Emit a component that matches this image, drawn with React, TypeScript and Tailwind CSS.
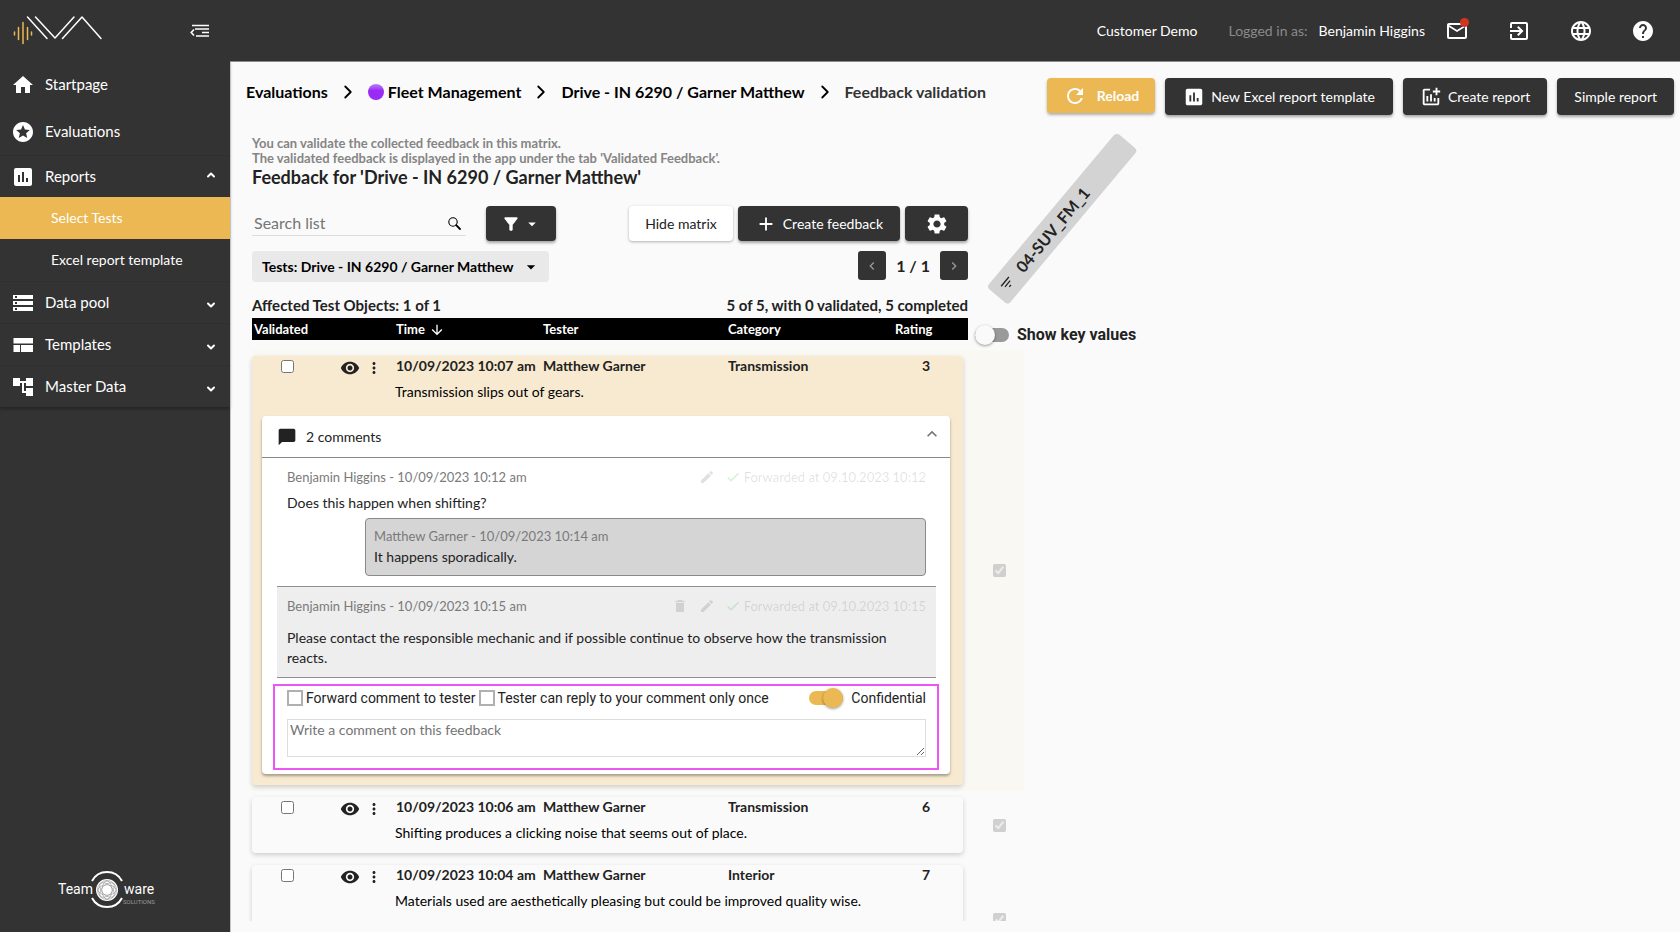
import type { ReactNode } from "react";
import {
    MdAccountTree,
    MdAdd,
    MdAddchart,
    MdArrowDownward,
    MdArrowDropDown,
    MdAssessment,
    MdChatBubble,
    MdCheck,
    MdChevronLeft,
    MdChevronRight,
    MdDelete,
    MdEdit,
    MdExitToApp,
    MdFilterAlt,
    MdFilterList,
    MdHelp,
    MdHome,
    MdKeyboardArrowUp,
    MdLanguage,
    MdMailOutline,
    MdMoreVert,
    MdRefresh,
    MdSettings,
    MdStars,
    MdStorage,
    MdVisibility,
} from "react-icons/md";
import { ChevronDown, ChevronRight, ChevronUp } from "lucide-react";

const darkButton =
    "flex items-center justify-center rounded-[4px] bg-[#333333] text-white text-sm shadow-[0_2px_3px_rgba(0,0,0,0.35)]";

const Logo = () => (
    <svg width="90" height="32" viewBox="0 0 90 32" fill="none" aria-label="IVA">
        <g stroke="#ebb853" strokeWidth="1.5" strokeLinecap="round">
            <path d="M1.5 17v3M5.5 12.5v12M10 7.500v21M14.500 12.500v12M18.500 17v3" />
        </g>
        <g stroke="#ffffff" strokeWidth="1.5" strokeLinecap="round" strokeLinejoin="round">
            <path d="M14.500 2L34 23.500" />
            <path d="M22.500 2L42 23L61 2" />
            <path d="M49.500 23.500L69 2L88 23.500" />
        </g>
    </svg>
);

const MenuFoldIcon = () => (
    <svg width="19" height="14" viewBox="0 0 19 14" fill="none" stroke="#ffffff" strokeWidth="1.600">
        <path d="M2 1.500H19M5 5H19M12 8.500H19M6 12H19" />
        <path d="M4 5.500L1.200 8.500L4 11.500" />
    </svg>
);

const TemplatesIcon = () => (
    <svg width="24" height="24" viewBox="0 0 24 24" fill="currentColor">
        <path d="M2.500 5h19.500v5.500H2.500zM2.500 12h6.500v7H2.500zM10 12h12v7H10z" />
    </svg>
);

const SearchIcon = () => (
    <svg width="13" height="13" viewBox="0 0 13 13" fill="none" stroke="#000000">
        <circle cx="5" cy="5" r="4.200" strokeWidth="1.100" />
        <path d="M8.200 8.200L12 12" strokeWidth="1.800" strokeLinecap="round" />
    </svg>
);

const TeamwareLogo = () => (
    <svg width="98" height="38" viewBox="0 0 98 38" fill="none" aria-label="Teamware Solutions">
        <g fill="#ffffff" fontFamily="Roboto, sans-serif">
            <text x="0" y="23" fontSize="14">Team</text>
            <text x="66" y="23" fontSize="14">ware</text>
            <text x="65" y="33" fontSize="6" fill="#999999">SOLUTIONS</text>
        </g>
        <g stroke="#ffffff" strokeWidth="2">
            <path d="M34 10A17 17 0 0 1 64 10" />
            <path d="M34 27A17 17 0 0 0 64 27" />
        </g>
        <circle cx="49" cy="19" r="11" fill="#ffffff" />
        <g stroke="#8a8a8a" strokeWidth="0.600">
            <circle cx="49" cy="19" r="9.500" />
            <ellipse cx="49" cy="19" rx="9" ry="5" />
            <ellipse cx="49" cy="19" rx="5" ry="9" />
            <ellipse cx="49" cy="19" rx="9" ry="5" transform="rotate(45 49 19)" />
            <ellipse cx="49" cy="19" rx="9" ry="5" transform="rotate(-45 49 19)" />
        </g>
        <circle cx="49" cy="19" r="4.500" fill="#ffffff" />
    </svg>
);

const NavItem = ({ icon, label, open }: { icon: ReactNode; label: string; open?: boolean }) => (
    <a
        href="#"
        className={
            open === undefined
                ? "flex h-[47px] items-center gap-[10px] pl-[11px] text-[15px]"
                : "flex h-[42px] items-center gap-[10px] border-t border-[#2f2f2f] pl-[11px] pr-[13px] text-[15px]"
        }
    >
        {icon}
        <span className="flex-1">{label}</span>
        {open === true && <ChevronUp size={12} strokeWidth={4} className="mb-1" />}
        {open === false && <ChevronDown size={12} strokeWidth={4} className="mt-1" />}
    </a>
);

const Sidebar = () => (
    <aside className="flex w-[230px] shrink-0 flex-col bg-[#333333] text-white">
        <div className="flex h-[62px] items-center justify-between pl-[13px] pr-[21px]">
            <Logo />
            <button aria-label="Collapse menu">
                <MenuFoldIcon />
            </button>
        </div>
        <nav className="-mt-px shadow-[0_2px_3px_rgba(0,0,0,0.3)]">
            <NavItem icon={<MdHome size={24} />} label="Startpage" />
            <NavItem icon={<MdStars size={24} />} label="Evaluations" />
            <NavItem icon={<MdAssessment size={24} />} label="Reports" open />
            <a href="#" className="flex h-[42px] items-center bg-[#ebb853] pl-[51px] text-sm">Select Tests</a>
            <a href="#" className="flex h-[42px] items-center pl-[51px] text-sm">Excel report template</a>
            <NavItem icon={<MdStorage size={24} />} label="Data pool" open={false} />
            <NavItem icon={<TemplatesIcon />} label="Templates" open={false} />
            <NavItem icon={<MdAccountTree size={24} />} label="Master Data" open={false} />
        </nav>
        <div className="mt-auto flex justify-center pb-[23px] pr-4">
            <TeamwareLogo />
        </div>
    </aside>
);

const TopBar = () => (
    <header className="flex h-[62px] shrink-0 items-center justify-end border-b border-[#8a8a8a] bg-[#333333] pr-[25px] text-sm text-white">
        <span className="mr-[31px]">Customer Demo</span>
        <span className="mr-[11px] text-[#8a8a8a]">Logged in as:</span>
        <span className="mr-5">Benjamin Higgins</span>
        <div className="flex items-center gap-[38px]">
            <button aria-label="Messages" className="relative">
                <MdMailOutline size={24} />
                <span className="absolute right-0 -top-px size-[9px] rounded-full bg-[#d0361f]"></span>
            </button>
            <button aria-label="Log out"><MdExitToApp size={24} /></button>
            <button aria-label="Language"><MdLanguage size={24} /></button>
            <button aria-label="Help"><MdHelp size={24} /></button>
        </div>
    </header>
);

const Crumbs = () => (
    <nav className="flex h-7 items-center text-base font-bold text-black">
        <a href="#">Evaluations</a>
        <ChevronRight size={22} className="mx-[9px]" />
        <a href="#" className="flex items-center gap-1">
            <span className="size-4 rounded-full bg-linear-to-b from-[#b77bf5] to-[#9a2bf5] to-40%"></span>
            Fleet Management
        </a>
        <ChevronRight size={22} className="mx-[9px]" />
        <a href="#">Drive - IN 6290 / Garner Matthew</a>
        <ChevronRight size={22} className="mx-[9px]" />
        <span className="text-[#333333]">Feedback validation</span>
    </nav>
);

const Switch = ({ id, on }: { id: string; on?: boolean }) => (
    <input
        id={id}
        type="checkbox"
        role="switch"
        defaultChecked={on}
        className="relative h-[14px] w-[34px] shrink-0 appearance-none rounded-full bg-[#9a9a9a] before:absolute before:-top-[3px] before:left-0 before:size-5 before:rounded-full before:bg-[#fafafa] before:shadow-[0_1px_3px_rgba(0,0,0,0.4)] checked:bg-[#ebb853] checked:before:left-[14px] checked:before:bg-[#ebb853]"
    />
);

const Toolbar = () => (
    <div className="w-[calc(50%+2px)]">
        <p className="text-[13px] leading-[15px] font-bold text-[#858585]">
            You can validate the collected feedback in this matrix.
            <br />
            The validated feedback is displayed in the app under the tab 'Validated Feedback'.
        </p>
        <h1 className="text-lg leading-[22px] font-bold">Feedback for 'Drive - IN 6290 / Garner Matthew'</h1>

        <div className="mt-[18px] flex h-[35px] items-center">
            <div className="flex h-6 w-[214px] items-center border-b border-[#dddddd] pr-[5px]">
                <input
                    aria-label="Search list"
                    placeholder="Search list"
                    className="min-w-0 flex-1 bg-transparent pl-[2px] text-base outline-none placeholder:text-[#757575]"
                />
                <button aria-label="Search"><SearchIcon /></button>
            </div>
            <button aria-label="Filter" className={`${darkButton} ml-5 h-[35px] w-[70px] gap-[2px]`}>
                <MdFilterAlt size={20} />
                <MdArrowDropDown size={18} />
            </button>
            <div className="ml-auto flex gap-[5px]">
                <button className="h-[35px] rounded-[4px] bg-white px-4 text-sm text-[#222222] shadow-[0_1px_3px_rgba(0,0,0,0.3)]">
                    Hide matrix
                </button>
                <button className={`${darkButton} h-[35px] gap-[6px] px-[17px]`}>
                    <MdAdd size={22} />
                    Create feedback
                </button>
                <button aria-label="Settings" className={`${darkButton} h-[35px] w-[63px]`}>
                    <MdSettings size={24} />
                </button>
            </div>
        </div>

        <div className="mt-[10px] flex items-start justify-between">
            <button className="flex h-[31px] items-center gap-2 rounded-[4px] bg-[#e9e9e9] pl-[10px] pr-2 text-sm font-bold text-black">
                Tests: Drive - IN 6290 / Garner Matthew
                <MdArrowDropDown size={20} />
            </button>
            <div className="flex items-center gap-[10px] text-base font-bold">
                <button aria-label="Previous page" className="flex h-[29px] w-7 items-center justify-center rounded-[3px] bg-[#333333] text-[#9a9a9a]">
                    <MdChevronLeft size={16} />
                </button>
                1 / 1
                <button aria-label="Next page" className="flex h-[29px] w-7 items-center justify-center rounded-[3px] bg-[#333333] text-[#9a9a9a]">
                    <MdChevronRight size={16} />
                </button>
            </div>
        </div>

        <div className="mt-[13px] flex justify-between pb-[3px] text-[15px] leading-5 font-bold">
            <span>Affected Test Objects: 1 of 1</span>
            <span>5 of 5, with 0 validated, 5 completed</span>
        </div>
    </div>
);

const CommentMeta = ({ author, forwarded, deletable }: { author: string; forwarded: string; deletable?: boolean }) => (
    <div className="flex items-center text-[13px] leading-[18px] text-[#7a7a7a]">
        <span className="flex-1">{author}</span>
        <span className="flex items-center text-black/12">
            {deletable && <button aria-label="Delete comment" className="mr-[11px]"><MdDelete size={16} /></button>}
            <button aria-label="Edit comment"><MdEdit size={16} /></button>
            <MdCheck size={16} className="ml-[10px] mr-[3px] text-[#22bb22]/20" />
            Forwarded at {forwarded}
        </span>
    </div>
);

const Comments = () => (
    <div className="mr-[13px] mb-[11px] ml-[10px] rounded-[4px] bg-white pb-1 shadow-[0_2px_3px_rgba(0,0,0,0.35)]">
        <button className="flex h-[42px] w-full items-center border-b border-[#8a8a8a] pl-[15px] pr-2 text-sm">
            <MdChatBubble size={20} />
            <span className="ml-[9px] flex-1 text-left">2 comments</span>
            <MdKeyboardArrowUp size={20} className="mb-[6px] text-[#757575]" />
        </button>

        <div className="pt-[10px] pr-6 pl-[25px] text-sm leading-5">
            <CommentMeta author="Benjamin Higgins - 10/09/2023 10:12 am" forwarded="09.10.2023 10:12" />
            <p className="mt-[7px]">Does this happen when shifting?</p>
            <div className="mt-[5px] ml-[78px] rounded-[4px] border border-[#8a8a8a] bg-[#d5d5d5] px-2 py-2">
                <div className="mb-[2px] text-[13px] leading-[18px] text-[#7a7a7a]">Matthew Garner - 10/09/2023 10:14 am</div>
                <p>It happens sporadically.</p>
            </div>
        </div>

        <div className="mt-[10px] mr-[14px] ml-[15px] border-y border-[#8f8f8f] bg-[#eeeeee] px-[10px] pt-[10px] pb-[9px] text-sm leading-5">
            <CommentMeta author="Benjamin Higgins - 10/09/2023 10:15 am" forwarded="09.10.2023 10:15" deletable />
            <p className="mt-[13px]">
                Please contact the responsible mechanic and if possible continue to observe how the transmission reacts.
            </p>
        </div>

        <form className="mx-[11px] mt-[6px] border-2 border-[#ee55f5] pt-[2px] pr-[11px] pb-[11px] pl-3 font-['Roboto',sans-serif] text-sm">
            <div className="flex h-5 items-center">
                <input id="forward" type="checkbox" className="mr-[3px] size-4 appearance-none border-2 border-[#b0b0b0] bg-white checked:bg-[#ebb853]" />
                <label htmlFor="forward" className="mr-[3px]">Forward comment to tester</label>
                <input id="once" type="checkbox" className="mr-[3px] size-4 appearance-none border-2 border-[#b0b0b0] bg-white checked:bg-[#ebb853]" />
                <label htmlFor="once">Tester can reply to your comment only once</label>
                <span className="ml-auto flex items-center gap-2">
                    <Switch id="confidential" on />
                    <label htmlFor="confidential">Confidential</label>
                </span>
            </div>
            <textarea
                aria-label="Comment"
                placeholder="Write a comment on this feedback"
                className="mt-[11px] block h-[38px] w-full border border-[#dddddd] px-[2px] font-['Lato',sans-serif] text-sm leading-5 placeholder:text-[#757575]"
            ></textarea>
        </form>
    </div>
);

const columns = "grid-cols-[144px_147px_185px_1fr_73px]";
const cardColumns = "grid-cols-[144px_147px_185px_1fr_68px]";

type Feedback = {
    time: string;
    tester: string;
    category: string;
    rating: number;
    text: string;
    active?: boolean;
    tall?: boolean;
};

const feedback: Feedback[] = [
    { time: "10/09/2023 10:07 am", tester: "Matthew Garner", category: "Transmission", rating: 3, text: "Transmission slips out of gears.", active: true },
    { time: "10/09/2023 10:06 am", tester: "Matthew Garner", category: "Transmission", rating: 6, text: "Shifting produces a clicking noise that seems out of place." },
    { time: "10/09/2023 10:04 am", tester: "Matthew Garner", category: "Interior", rating: 7, text: "Materials used are aesthetically pleasing but could be improved quality wise.", tall: true },
];

const FeedbackRow = ({ item }: { item: Feedback }) => (
    <tbody className={`flex py-[6px] ${item.active ? "bg-[#faf8f3]" : ""}`}>
        <tr
            className={`mr-[5px] grid flex-1 content-start rounded-[4px] text-sm font-bold leading-5 shadow-[0_2px_5px_rgba(0,0,0,0.18)] ${cardColumns} ${
                item.active ? "bg-[#f7ead0]" : "bg-[#fafafa]"
            } ${item.tall ? "min-h-[109px]" : ""}`}
        >
            <td className="flex h-[22px] items-center pl-[29px]">
                <input type="checkbox" aria-label={`Validated ${item.time}`} className="mr-auto mb-[2px] size-[13px]" />
                <button aria-label="Show feedback" className="mr-[5px] mt-[2px]"><MdVisibility size={20} /></button>
                <button aria-label="More" className="mr-[13px] mt-[2px]"><MdMoreVert size={18} /></button>
            </td>
            <td>{item.time}</td>
            <td>{item.tester}</td>
            <td>{item.category}</td>
            <td className="pl-[27px]">{item.rating}</td>
            <td className={`col-span-5 pt-1 pl-[143px] font-normal text-black ${item.active ? "pb-[14px]" : "pb-[10px]"}`}>
                {item.text}
            </td>
            {item.active && (
                <td className="col-span-5 font-normal">
                    <Comments />
                </td>
            )}
        </tr>
        <tr className="flex w-14 items-center pl-[25px]">
            <td className="flex">
                <input
                    type="checkbox"
                    aria-label={`04-SUV_FM_1 ${item.time}`}
                    defaultChecked
                    disabled
                    className="size-[13px]"
                />
            </td>
        </tr>
    </tbody>
);

export default function App() {
    return (
        <div className="flex h-screen bg-[#fafafa] font-['Lato',sans-serif] text-[#222222]">
            <Sidebar />
            <main className="flex min-w-0 flex-1 flex-col">
                <TopBar />
                <div className="flex min-h-0 flex-1 flex-col border-l border-[#c4c4c4]">
                    <div className="flex items-start justify-between pt-4 pr-[6px] pl-[15px]">
                        <Crumbs />
                        <div className="flex items-start gap-[10px]">
                            <button className="flex h-[35px] items-center gap-[10px] rounded-[4px] bg-[#ebb853] px-4 text-sm font-bold text-white shadow-[0_2px_3px_rgba(0,0,0,0.3)]">
                                <MdRefresh size={24} />
                                Reload
                            </button>
                            <button className={`${darkButton} h-[37px] gap-[6px] px-[18px]`}>
                                <MdAssessment size={22} />
                                New Excel report template
                            </button>
                            <button className={`${darkButton} h-[37px] gap-[6px] px-[17px]`}>
                                <MdAddchart size={22} />
                                Create report
                            </button>
                            <button className={`${darkButton} h-[37px] px-[17px]`}>Simple report</button>
                        </div>
                    </div>

                    <section className="mb-[11px] flex min-h-0 flex-1 flex-col overflow-hidden pt-[21px] pl-[21px]">
                        <div className="flex">
                            <Toolbar />
                            <div className="flex flex-1 items-end pb-[13px] pl-10">
                                <button className="flex h-7 w-[202px] origin-bottom-left -rotate-50 items-center gap-[10px] rounded-[4px] bg-[#d3d3d3] pl-2 text-base font-bold">
                                    <MdFilterList size={16} />
                                    04-SUV_FM_1
                                </button>
                            </div>
                        </div>
                        <table className="block w-[calc(50%+58px)]">
                            <thead className="flex h-8">
                                <tr className={`grid h-[22px] flex-1 items-center bg-black pt-px text-left text-[13px] text-white ${columns}`}>
                                    <th className="pl-[2px]">Validated</th>
                                    <th>
                                        <button className="flex items-center gap-1">
                                            Time <MdArrowDownward size={16} />
                                        </button>
                                    </th>
                                    <th>Tester</th>
                                    <th>Category</th>
                                    <th>Rating</th>
                                </tr>
                                <tr className="w-14 pl-[7px] font-['Roboto',sans-serif] text-base">
                                    <th className="flex h-[34px] items-center gap-2 font-bold whitespace-nowrap">
                                        <Switch id="keyValues" />
                                        <label htmlFor="keyValues">Show key values</label>
                                    </th>
                                </tr>
                            </thead>
                            {feedback.map((item) => (
                                <FeedbackRow key={item.time} item={item} />
                            ))}
                        </table>
                    </section>
                </div>
            </main>
        </div>
    );
}
